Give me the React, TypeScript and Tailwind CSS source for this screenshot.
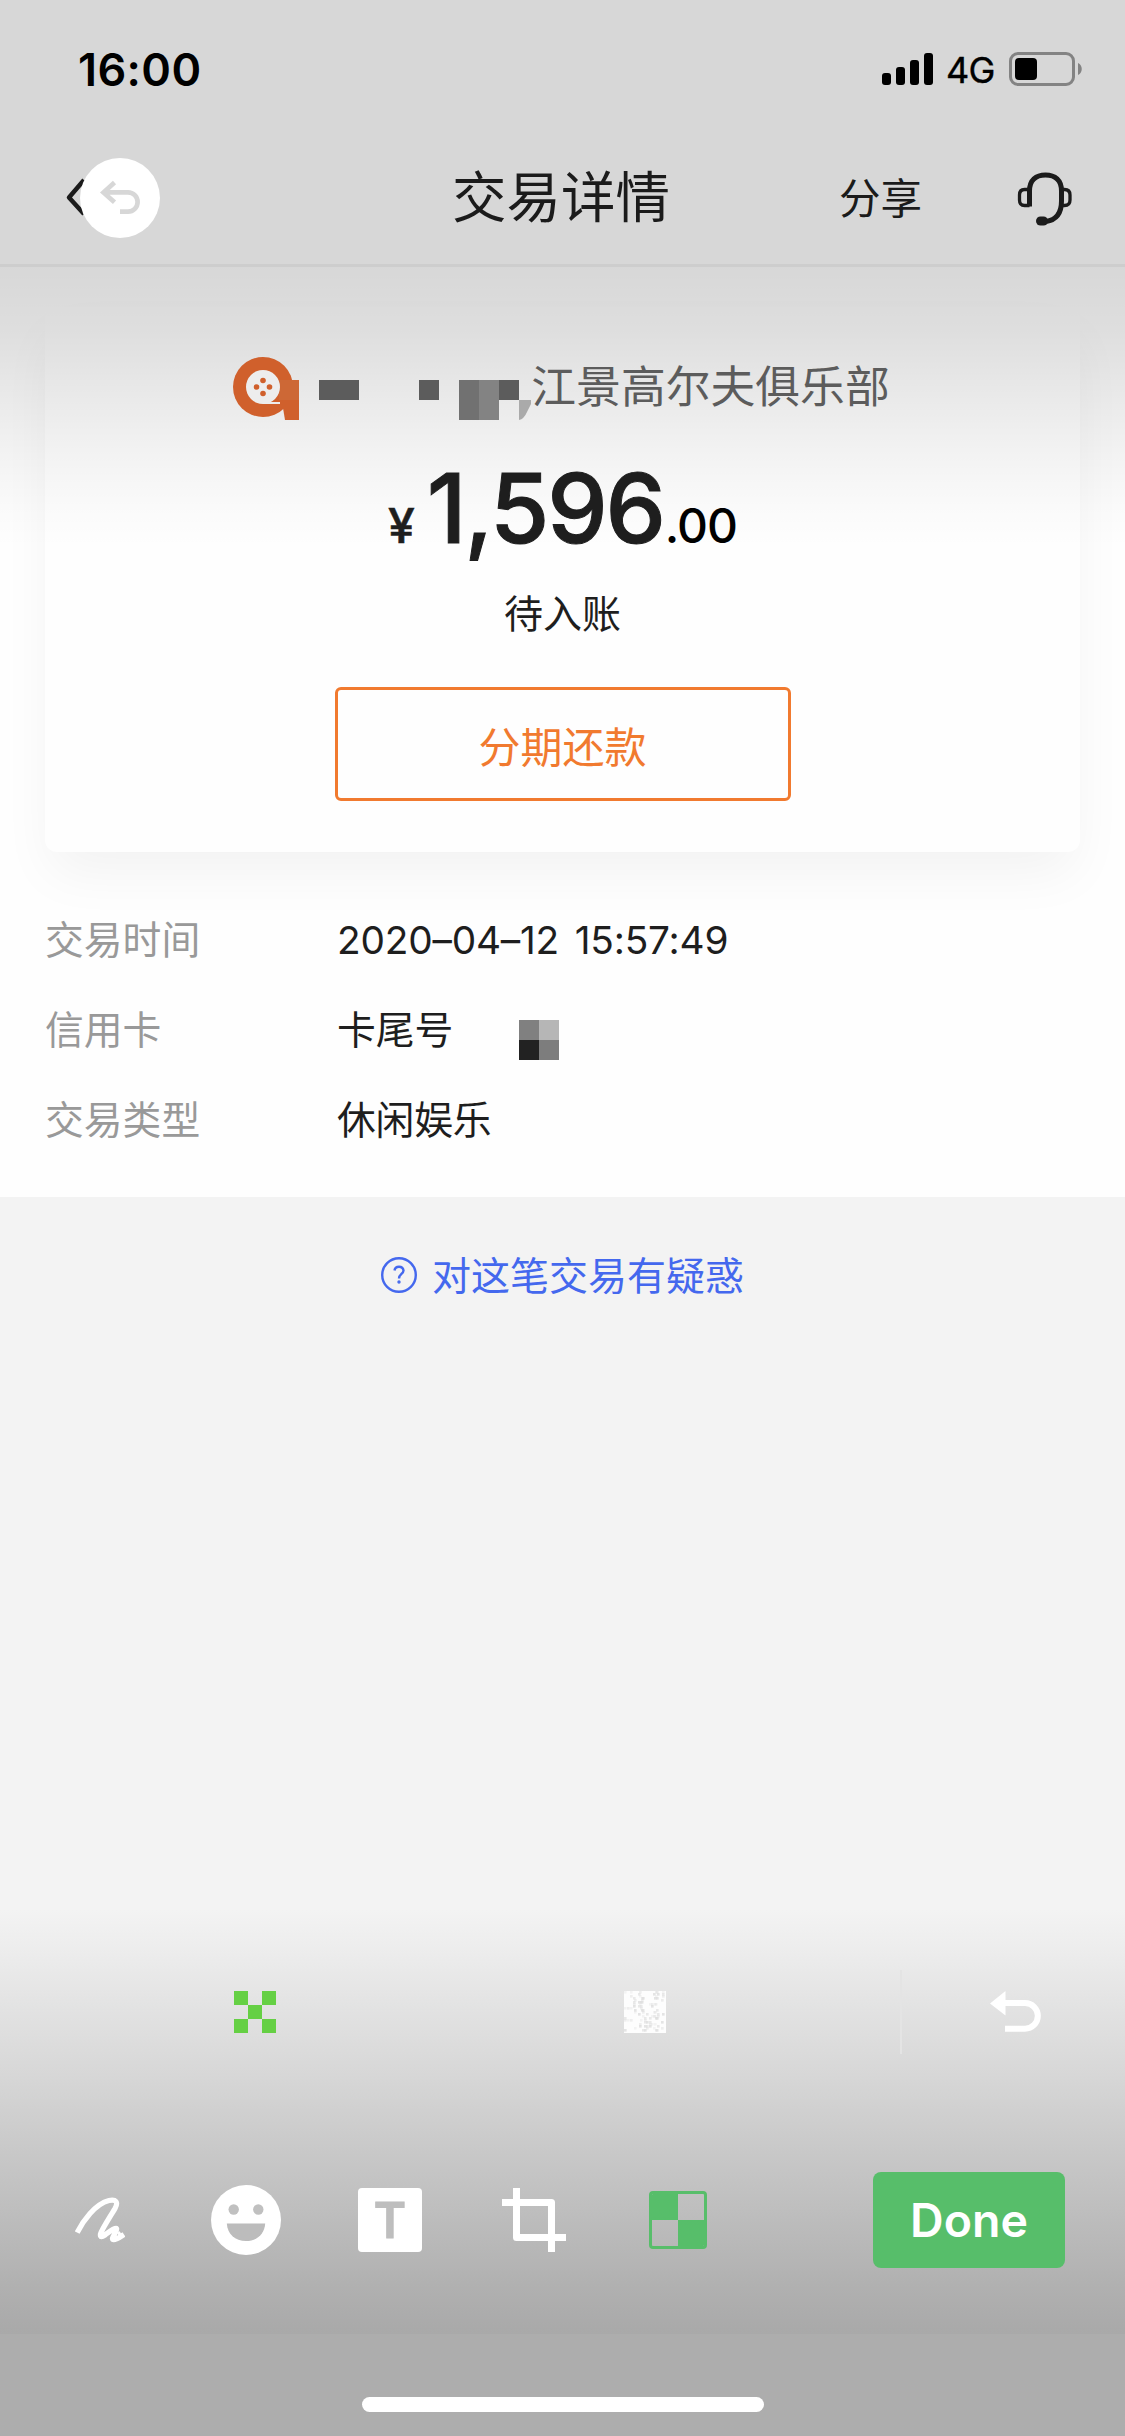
import type { ReactNode } from "react";

const DETAILS = [
  { label: "交易时间", value: "2020–04–12 15:57:49" },
  { label: "信用卡", value: "卡尾号", masked: true },
  { label: "交易类型", value: "休闲娱乐" },
];

const SIGNAL_BARS = [12, 18, 25, 32];

// Deterministic speckles for the "frosted" brush icon.
const SPECKLES = Array.from({ length: 90 }, (_, i) => ({
  x: (i * i * 13 + i * 7) % 41,
  y: (i * i * 5 + i * 23) % 40,
  o: 0.3 + (i % 4) * 0.17,
}));

function StatusBar() {
  return (
    <div className="flex h-[138px] items-center justify-between pr-[43px] pl-[78px] text-black">
      <div className="text-[45px] leading-none font-semibold tracking-[0.4px]">16:00</div>
      <div className="flex items-center">
        <div className="flex h-8 items-end gap-[5px]">
          {SIGNAL_BARS.map((h) => (
            <div key={h} className="w-[9px] rounded-[3px] bg-black" style={{ height: h }} />
          ))}
        </div>
        <div className="ml-[13px] w-[51px] pt-[2px] text-[36px] leading-none tracking-[-0.7px] [-webkit-text-stroke:0.4px_black]">
          4G
        </div>
        <svg className="ml-[12px]" width="73" height="34" viewBox="0 0 73 34">
          <rect x="1.5" y="1.5" width="63" height="31" rx="7.5" fill="none" stroke="#838383" strokeWidth="3" />
          <rect x="6" y="6" width="22" height="22" rx="4" fill="#000" />
          <path d="M69 11c5 2 5 10 0 12z" fill="#838383" />
        </svg>
      </div>
    </div>
  );
}

function NavBar() {
  return (
    <div className="flex h-[129px] items-center border-b-[3px] border-[#cdcdcd] text-[#1b1b1b]">
      <svg className="mt-[-6px] ml-[62px]" width="100" height="82" viewBox="62 157 100 82">
        <path d="M84 180L69 197.5L84 214" fill="none" stroke="#1b1b1b" strokeWidth="4.5" strokeLinejoin="round" />
        <circle cx="120" cy="198" r="40" fill="#fff" />
        <path
          d="M114.5 182.5L103.5 192.4L114.5 202.3M104 192.4H128a9.6 9.6 0 0 1 0 19.2H120"
          fill="none"
          stroke="#d7d7d7"
          strokeWidth="4.7"
        />
      </svg>
      <h1 className="mt-[-8px] ml-[290px] w-[221px] text-[54.5px] leading-none whitespace-nowrap">交易详情</h1>
      <div className="mt-[-3px] ml-[166px] w-[90px] text-[41.5px] leading-none whitespace-nowrap">分享</div>
      <svg className="mt-[-5px] ml-[87px]" width="58" height="56" viewBox="0 0 58 56">
        <g fill="none" stroke="#1b1b1b" strokeWidth="3.3">
          <path
            d="M13.5 35.5V20C13.5 9 20 4 29.5 4S45.5 9 45.5 20V30C45.5 42 40 49 30 50.5"
            strokeWidth="5"
          />
          <path d="M13.5 18.5H8.5Q3.5 18.5 3.5 24V29Q3.5 34.5 8.5 34.5H13.5" />
          <path d="M45.5 18.5H48.5Q54 18.5 54 24V29Q54 34.5 48.5 34.5H45.5" />
        </g>
        <rect x="20" y="45.5" width="12" height="9" rx="4.5" fill="#1b1b1b" />
      </svg>
    </div>
  );
}

// Merchant logo and the mosaic that hides the first half of the name.
function MaskedMerchant() {
  return (
    <svg className="shrink-0" width="298" height="66" viewBox="234 354 298 66">
      <circle cx="264" cy="387" r="30" fill="#d0602c" />
      <path d="M281 380H300V420H286L284 408Z" fill="#d0602c" />
      <rect x="280" y="380" width="20" height="20" fill="#cd6836" />
      <path d="M264 370a17 17 0 1 1 0 34a17 17 0 1 1 0-34M264 402H281V404H264Z" fill="#ededed" />
      <g fill="#d0602c">
        <circle cx="264" cy="380.5" r="2.8" />
        <circle cx="257.5" cy="387" r="2.8" />
        <circle cx="270.5" cy="387" r="2.8" />
        <circle cx="264" cy="393.5" r="2.8" />
      </g>
      <g fill="#5c5c5c">
        <rect x="320" y="380" width="40" height="20" />
        <rect x="420" y="380" width="20" height="20" />
        <rect x="500" y="380" width="20" height="20" />
      </g>
      <rect x="460" y="380" width="20" height="40" fill="#717171" />
      <rect x="480" y="380" width="20" height="40" fill="#838383" />
      <path d="M520 400H534L528 412Q525 419 520 420Z" fill="#aaa" />
    </svg>
  );
}

function SummaryCard() {
  return (
    <div className="mx-[45px] flex flex-col items-center rounded-xl bg-[#fefefe] pt-[47px] pb-[51px] shadow-[0_26px_54px_-6px_rgba(0,0,0,0.05)]">
      <div className="z-10 mr-[2px] flex h-[66px] items-center">
        <MaskedMerchant />
        <span className="text-[44.8px] leading-none whitespace-nowrap text-[#5c5c5c]">江景高尔夫俱乐部</span>
      </div>
      <div className="z-10 mt-[38px] flex h-[100px] items-baseline leading-[100px] text-[#1e1e1e]">
        <span className="mr-[12px] text-[48px] font-medium [-webkit-text-stroke:0.6px_#1e1e1e]">¥</span>
        <span className="text-[96px] font-medium tracking-[-2.2px] [-webkit-text-stroke:1px_#1e1e1e]">1,596</span>
        <span className="ml-px text-[48px] font-medium tracking-[-1px] text-black">.00</span>
      </div>
      <div className="mt-[25px] flex h-[60px] items-center text-[39px] leading-none text-[#1e1e1e]">待入账</div>
      <button className="mt-[44px] flex h-[114px] w-[456px] items-center justify-center rounded-md border-[3px] border-[#f17a2f] pt-[7px] text-[42px] leading-none text-[#f17a2f]">
        分期还款
      </button>
    </div>
  );
}

function CardMask() {
  return (
    <div className="mt-[20px] ml-[66px] grid grid-cols-2">
      <div className="size-5 bg-[#808080]" />
      <div className="size-5 bg-[#b6b6b6]" />
      <div className="size-5 bg-[#222222]" />
      <div className="size-5 bg-[#7d7d7d]" />
    </div>
  );
}

function Tool({ children }: { children: ReactNode }) {
  return <div className="flex h-[80px] w-[144px] items-center justify-center">{children}</div>;
}

function EditorTools() {
  return (
    <div className="flex h-[424px] flex-col bg-[linear-gradient(to_bottom,#f3f3f3_0%,#ededed_9%,#d6d6d6_40%,#c9c9c9_56%,#aeaeae_92%,#a9a9a9_100%)]">
      <div className="mt-[60px] flex h-[84px] items-center">
        <svg className="ml-[234px]" width="42" height="42" viewBox="0 0 3 3" fill="#65d044" shapeRendering="crispEdges">
          <path d="M0 0h1v1h-1zM2 0h1v1h-1zM1 1h1v1h-1zM0 2h1v1h-1zM2 2h1v1h-1z" />
        </svg>
        <svg className="ml-[348px]" width="42" height="42" viewBox="0 0 42 42">
          <rect width="42" height="42" fill="#fdfdfd" />
          {SPECKLES.map((s, i) => (
            <rect key={i} x={s.x} y={s.y} width="2.6" height="2.6" fill="#dedede" opacity={s.o} />
          ))}
        </svg>
        <div className="ml-[234px] h-[84px] w-[2px] bg-[#e4e4e4]" />
        <svg className="ml-[88px]" width="52" height="42" viewBox="0 0 52 42">
          <path d="M0 12.5L15.5 0V24.5Z" fill="#fff" />
          <path d="M14 12H35a12.8 12.8 0 0 1 0 25.7H15" fill="none" stroke="#fff" strokeWidth="6" />
        </svg>
      </div>
      <div className="mt-[118px] flex h-[96px] items-center">
        <div className="ml-[30px] flex">
          <Tool>
            <svg className="mr-[4px]" width="50" height="46" viewBox="0 0 50 46" fill="none" stroke="#fff" strokeWidth="5.3">
              <path
                d="M2.2 35.5C8 24 20 7 34 3.5C41 2 43.5 5 40 11.5C35 20 27 32 25.5 37C25 40.5 27 40 30 38C33.5 35.5 39 30.5 41.5 31.5C43 33 38 38.5 37.5 41.5C38 44.5 44 41 49 37.5"
                strokeLinejoin="round"
              />
              <path d="M43.5 35L46 40" strokeWidth="3" />
            </svg>
          </Tool>
          <Tool>
            <svg width="70" height="70" viewBox="0 0 70 70">
              <circle cx="35" cy="35" r="35" fill="#fff" />
              <circle cx="22.7" cy="24.5" r="5.2" fill="#c0c0c0" />
              <circle cx="47.3" cy="24.5" r="5.2" fill="#c0c0c0" />
              <path d="M15.8 38.5H54.2C53.5 49 46 56 35 56S16.5 49 15.8 38.5Z" fill="#bcbcbc" />
            </svg>
          </Tool>
          <Tool>
            <div className="flex size-[64px] items-center justify-center rounded bg-white text-[49px] leading-none font-semibold text-[#bebebe] [-webkit-text-stroke:1px_#bebebe]">
              T
            </div>
          </Tool>
          <Tool>
            <svg width="64" height="64" viewBox="0 0 64 64" fill="none" stroke="#fff" strokeWidth="7" strokeLinejoin="round">
              <path d="M14.5 0V49.5H64" />
              <path d="M0 14.5H49.5V64" />
            </svg>
          </Tool>
          <Tool>
            <div className="grid size-[58px] grid-cols-2 overflow-hidden rounded border-[3px] border-[#57be6a]">
              <div className="bg-[#57be6a]" />
              <div />
              <div />
              <div className="bg-[#57be6a]" />
            </div>
          </Tool>
        </div>
        <button className="ml-[123px] flex h-[96px] w-[192px] items-center justify-center rounded-lg bg-[#57be6a] text-[46.5px] leading-none font-semibold text-white">
          Done
        </button>
      </div>
    </div>
  );
}

export default function App() {
  return (
    <div className="flex h-[2436px] w-[1125px] flex-col overflow-hidden bg-[#f3f3f3] font-[Inter,'Noto_Sans_CJK_SC',sans-serif]">
      <header className="bg-[#d7d7d7]">
        <StatusBar />
        <NavBar />
      </header>

      <main className="relative h-[930px] bg-[#fefefe] pt-[40px]">
        <div className="absolute inset-x-0 top-0 h-[280px] bg-[linear-gradient(to_bottom,rgba(0,0,0,0.152)_0%,rgba(0,0,0,0.125)_23%,rgba(0,0,0,0.08)_48%,rgba(0,0,0,0.045)_68%,rgba(0,0,0,0.015)_86%,rgba(0,0,0,0)_100%)]" />
        <SummaryCard />
        <dl className="mt-[43px] text-[38.8px] leading-none">
          {DETAILS.map((row) => (
            <div key={row.label} className="flex h-[90px] items-center px-[45px]">
              <dt className="w-[292px] text-[#999999]">{row.label}</dt>
              <dd className="flex items-center text-[#1e1e1e] [word-spacing:5px]">
                <span className={row.masked ? "" : "tracking-[-0.2px]"}>{row.value}</span>
                {row.masked && <CardMask />}
              </dd>
            </div>
          ))}
        </dl>
      </main>

      <div className="mt-[50px] flex h-[56px] items-center justify-center text-[#4468ee]">
        <svg className="mr-[15px]" width="36" height="36" viewBox="0 0 36 36" fill="none" stroke="#4468ee">
          <circle cx="18" cy="18" r="16.8" strokeWidth="2.4" />
          <path d="M13.5 13.5Q14 9.8 18 9.8T22.5 13.5C22.5 17 18 17 18 21.5" strokeWidth="2.4" />
          <circle cx="18" cy="25" r="1.1" strokeWidth="1.2" fill="#4468ee" />
        </svg>
        <span className="text-[39px] leading-none">对这笔交易有疑惑</span>
      </div>

      <footer className="mt-auto">
        <EditorTools />
        <div className="flex h-[102px] justify-center bg-[#adadad] pt-[63px]">
          <div className="h-[15px] w-[402px] rounded-full bg-white" />
        </div>
      </footer>
    </div>
  );
}
